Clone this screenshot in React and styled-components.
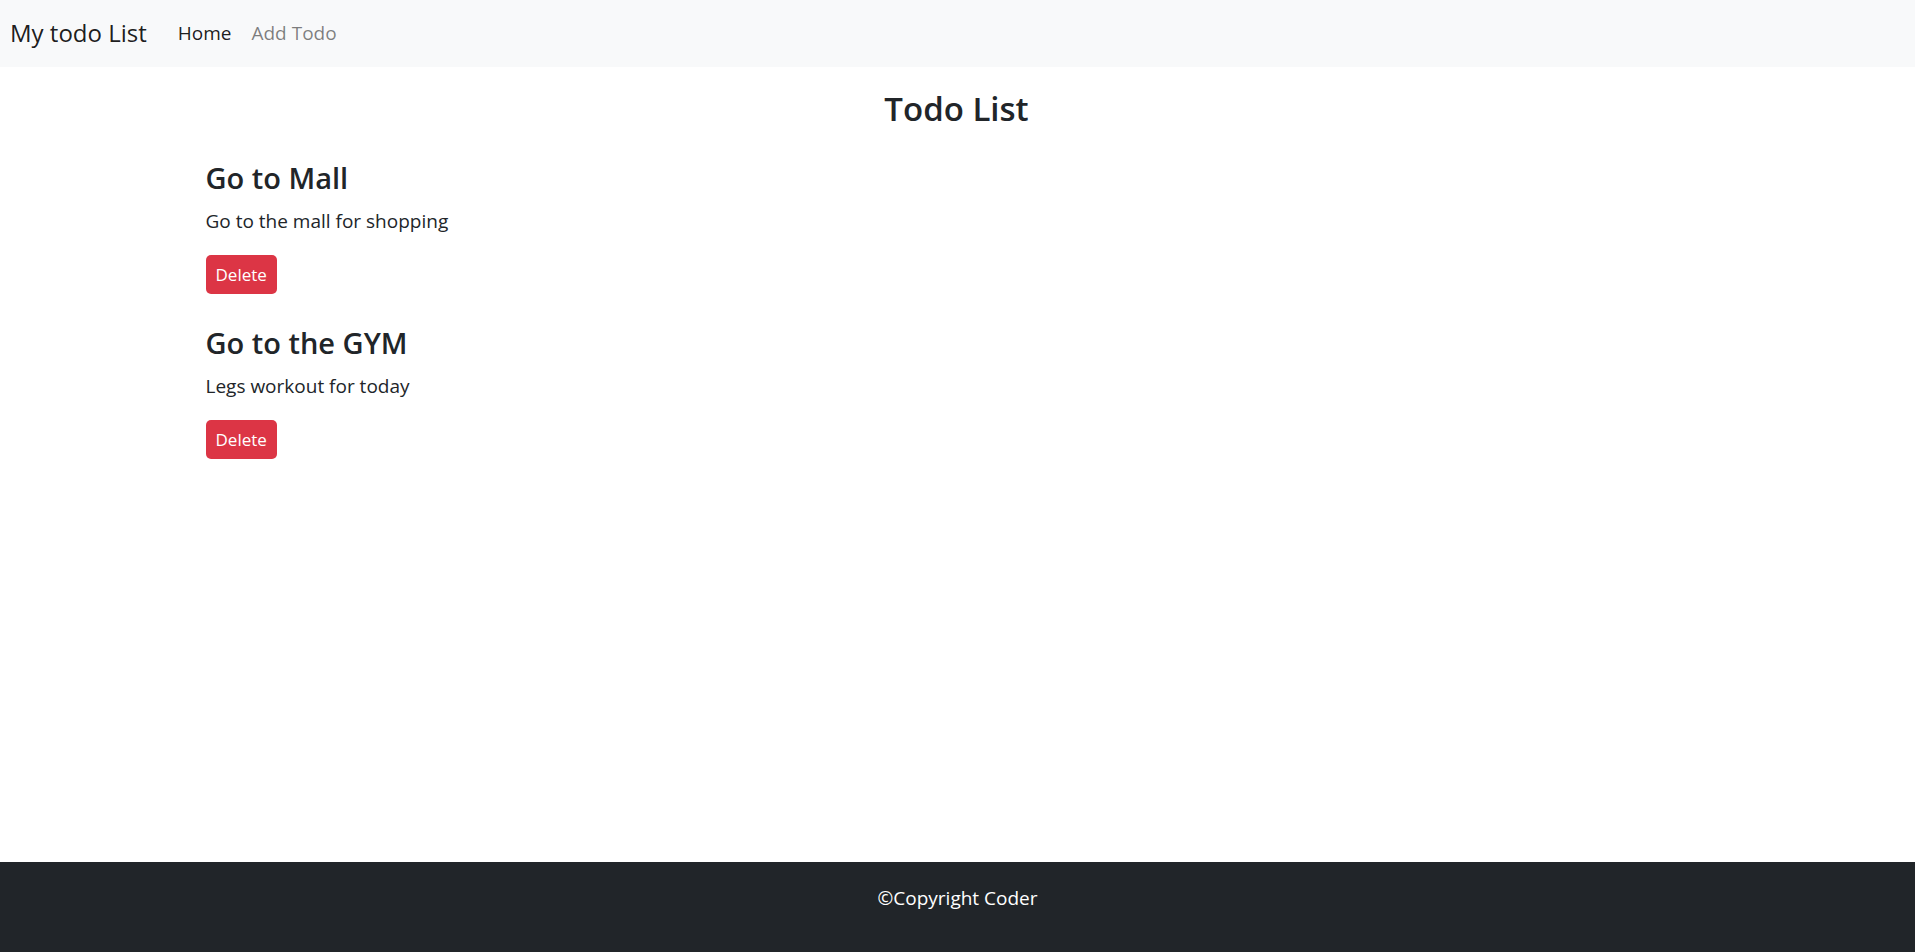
import React, { useState } from "react";
import styled, { createGlobalStyle } from "styled-components";

const GlobalStyle = createGlobalStyle`
  *, *::before, *::after { box-sizing: border-box; }
  body {
    margin: 0;
    background: #fff;
    color: #212529;
    font-family: "Segoe UI", "Open Sans", "Noto Sans", sans-serif;
    font-size: 19px;
    line-height: 30px;
  }
`;

const Page = styled.div`
  display: flex;
  flex-direction: column;
  min-height: 100vh;
`;

const Navbar = styled.nav`
  display: flex;
  align-items: center;
  min-height: 67px;
  padding: 8px 10px 10px;
  background: #f8f9fa;
`;

const Brand = styled.a`
  margin-right: 21px;
  color: rgba(0, 0, 0, 0.9);
  font-size: 24px;
  text-decoration: none;
`;

const NavList = styled.ul`
  display: flex;
  margin: 0;
  padding: 0;
  list-style: none;
`;

const NavLink = styled.a`
  display: block;
  padding: 8px 10px;
  color: ${({ $active }) => ($active ? "rgba(0, 0, 0, 0.9)" : "rgba(0, 0, 0, 0.5)")};
  font-size: 19px;
  text-decoration: none;
`;

const Main = styled.main`
  flex: 1;
  width: 80%;
  margin: 0 auto;
  padding: 20px 16px 20px 14px;
`;

const Title = styled.h1`
  margin: 0 0 29px;
  font-size: 33px;
  font-weight: 600;
  line-height: 44px;
  text-align: center;
`;

const Item = styled.article`
  margin-bottom: 31px;
`;

const ItemTitle = styled.h2`
  margin: 0 0 10px;
  font-size: 29px;
  font-weight: 600;
  line-height: 36px;
`;

const ItemText = styled.p`
  margin: 0 0 19px;
`;

const DeleteButton = styled.button`
  display: block;
  height: 39px;
  padding: 0 10px;
  border: 0;
  border-radius: 5px;
  background: #dc3545;
  color: #fff;
  font-family: inherit;
  font-size: 17px;
  cursor: pointer;
`;

const Footer = styled.footer`
  min-height: 90px;
  padding: 21px 20px;
  background: #212529;
  color: #fff;
  text-align: center;
`;

const initialTodos = [
  { id: 1, title: "Go to Mall", text: "Go to the mall for shopping" },
  { id: 2, title: "Go to the GYM", text: "Legs workout for today" },
];

export default function App() {
  const [todos, setTodos] = useState(initialTodos);
  return (
    <Page>
      <GlobalStyle />
      <Navbar>
        <Brand href="#">My todo List</Brand>
        <NavList>
          <li><NavLink href="#" $active>Home</NavLink></li>
          <li><NavLink href="#add">Add Todo</NavLink></li>
        </NavList>
      </Navbar>
      <Main>
        <Title>Todo List</Title>
        {todos.map((todo) => (
          <Item key={todo.id}>
            <ItemTitle>{todo.title}</ItemTitle>
            <ItemText>{todo.text}</ItemText>
            <DeleteButton type="button" onClick={() => setTodos(todos.filter((t) => t.id !== todo.id))}>
              Delete
            </DeleteButton>
          </Item>
        ))}
      </Main>
      <Footer>©Copyright Coder</Footer>
    </Page>
  );
}
